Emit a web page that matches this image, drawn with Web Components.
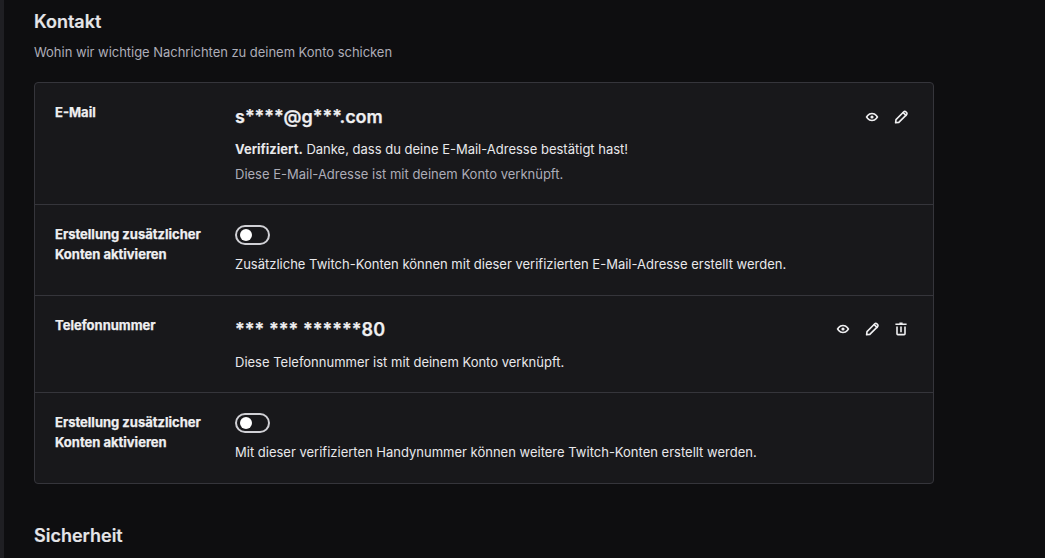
<!doctype html>
<html lang="de"><head><meta charset="utf-8">
<style>
html,body{margin:0;height:100%;background:#0e0e10;overflow:hidden}
body{font-family:Inter,"Liberation Sans",sans-serif;color:#efeff1;font-size:13px}
</style></head><body>
<template id="t-page"><style>
:host{display:block;height:558px;box-sizing:border-box;border-left:4px solid #1f1f23;padding:0 0 0 30px;overflow:hidden}
</style><slot></slot></template>

<template id="t-section"><style>
:host{display:block;width:900px}
h2{margin:0;font-size:18px;line-height:22px;font-weight:600;color:#e5e5e8;-webkit-text-stroke:.15px #e5e5e8}
p{margin:9px 0 0;font-size:13px;line-height:20px;color:#adadb8;letter-spacing:-.036px}
.card{margin-top:20px;background:#18181b;border:1px solid #35353b;border-radius:4px}
:host([plain]) .card{display:none}
</style><h2 id="h"></h2><p id="d"></p><div class="card"><slot></slot></div></template>

<template id="t-row"><style>
:host{display:grid;grid-template-columns:180px 1fr;padding:20px 20px var(--pb,20px);border-top:1px solid #35353b}
:host(:first-child){border-top:0}
.l{font-size:13px;line-height:20px;font-weight:700;color:#efeff1;padding-right:20px;margin-top:-1px;-webkit-text-stroke:.25px #efeff1}
.v{min-width:0}
</style><div class="l" id="l"></div><div class="v"><slot></slot></div></template>

<template id="t-value"><style>
:host{display:flex;justify-content:space-between;align-items:center;height:28px}
.t{font-size:18px;font-weight:600;line-height:28px;color:#efeff1;-webkit-text-stroke:.25px #efeff1;letter-spacing:var(--ls,0)}
.a{display:flex;gap:9px;margin-right:2px;margin-top:var(--ay,0)}
</style><span class="t"><slot></slot></span><span class="a"><slot name="a"></slot></span></template>

<template id="t-icon"><style>
:host{display:block;width:20px;height:20px;color:#efeff1}
svg{display:block;width:20px;height:20px}
</style><svg viewBox="0 0 20 20" fill="none" stroke="currentColor" stroke-width="1.6" stroke-linejoin="round" stroke-linecap="round"><g id="g"></g></svg></template>

<template id="t-toggle"><style>
:host{display:block;width:35px;height:20px;box-sizing:border-box;border:2px solid #d0d0d5;border-radius:10px;position:relative}
i{position:absolute;left:3px;top:2px;width:12px;height:12px;border-radius:50%;background:#fff;display:block}
</style><i></i></template>

<template id="t-note"><style>
:host{display:block;font-size:13px;line-height:20px;color:#e8e8eb;margin-top:var(--mt,0)}
:host([muted]){color:#adadb8}
::slotted(b){font-weight:700}
</style><slot></slot></template>

<script>
function def(name,tpl,extra){
  customElements.define(name,class extends HTMLElement{
    constructor(){super();const s=this.attachShadow({mode:"open"});s.appendChild(document.getElementById(tpl).content.cloneNode(true));}
    connectedCallback(){extra&&extra(this)}
  });
}
const P={
 eye:'<g transform="translate(2 2) scale(.8)" fill="currentColor" stroke="none" fill-rule="evenodd"><path d="M12 10a2 2 0 1 1-4 0 2 2 0 0 1 4 0Z"/><path d="M16.175 7.567 18 10l-1.825 2.433a7.853 7.853 0 0 1-12.350 0L2 10l1.825-2.433a7.853 7.853 0 0 1 12.350 0ZM4.500 10l.9-1.200a5.853 5.853 0 0 1 9.200 0l.9 1.200-.9 1.200a5.853 5.853 0 0 1-9.200 0L4.500 10Z"/></g>',
 pen:'<path d="M4.600 15.800l.4-3.200 7.800-7.800a1.400 1.400 0 0 1 2 0l.8.8a1.400 1.400 0 0 1 0 2l-7.800 7.800-3.200.4Z"/><path d="M12.200 5.600l2.800 2.800"/>',
 trash:'<g transform="translate(2 2) scale(.8)" fill="currentColor" stroke="none"><path d="M12 2H8v1H3v2h14V3h-5V2Z"/><path d="M4 7v9a2 2 0 0 0 2 2h8a2 2 0 0 0 2-2V7h-2v9H6V7H4Z"/><path d="M11 7H9v7h2V7Z"/></g>'
};
def("x-page","t-page");
def("x-section","t-section",e=>{const r=e.shadowRoot;r.getElementById("h").textContent=e.getAttribute("heading");
  const d=e.getAttribute("desc");const p=r.getElementById("d");if(d)p.textContent=d;else p.remove();});
def("x-row","t-row",e=>{e.shadowRoot.getElementById("l").innerHTML=e.getAttribute("label")});
def("x-value","t-value");
def("x-icon","t-icon",e=>{e.shadowRoot.getElementById("g").innerHTML=P[e.getAttribute("name")]});
def("x-toggle","t-toggle");
def("x-note","t-note");
</script>

<x-page>
<x-section heading="Kontakt" desc="Wohin wir wichtige Nachrichten zu deinem Konto schicken" style="padding-top:11px">
  <x-row label="E-Mail">
    <x-value>s****@g***.com<x-icon slot="a" name="eye"></x-icon><x-icon slot="a" name="pen"></x-icon></x-value>
    <x-note style="--mt:8px"><b>Verifiziert.</b> Danke, dass du deine E-Mail-Adresse bestätigt hast!</x-note>
    <x-note muted style="--mt:5px">Diese E-Mail-Adresse ist mit deinem Konto verknüpft.</x-note>
  </x-row>
  <x-row label="Erstellung zusätzlicher Konten aktivieren" style="--pb:21px">
    <x-toggle></x-toggle>
    <x-note style="--mt:9px">Zusätzliche Twitch-Konten können mit dieser verifizierten E-Mail-Adresse erstellt werden.</x-note>
  </x-row>
  <x-row label="Telefonnummer">
    <x-value style="--ay:-2px;--ls:.07px">*** *** ******80<x-icon slot="a" name="eye"></x-icon><x-icon slot="a" name="pen"></x-icon><x-icon slot="a" name="trash"></x-icon></x-value>
    <x-note style="--mt:8px">Diese Telefonnummer ist mit deinem Konto verknüpft.</x-note>
  </x-row>
  <x-row label="Erstellung zusätzlicher Konten aktivieren" style="--pb:21px">
    <x-toggle></x-toggle>
    <x-note style="--mt:9px">Mit dieser verifizierten Handynummer können weitere Twitch-Konten erstellt werden.</x-note>
  </x-row>
</x-section>
<x-section plain heading="Sicherheit" style="margin-top:41px"></x-section>
</x-page>
</body></html>
